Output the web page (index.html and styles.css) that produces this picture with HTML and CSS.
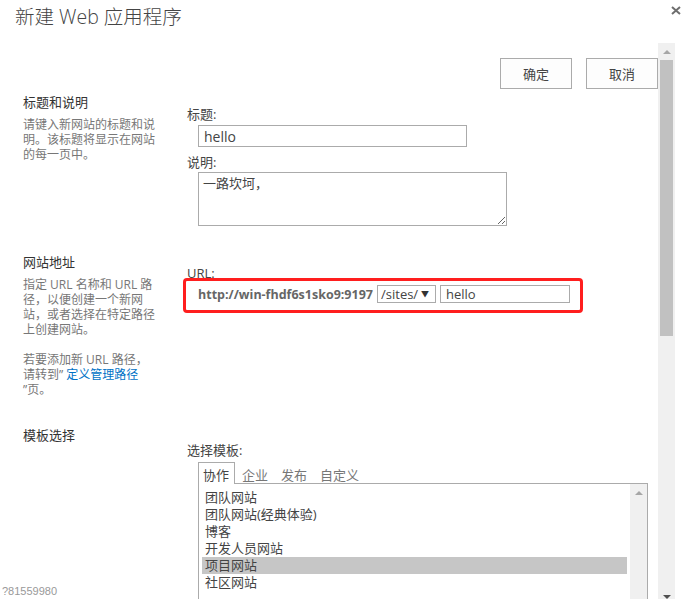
FILE: index.html
```html
<!DOCTYPE html>
<html lang="zh-CN">
<head>
<meta charset="utf-8">
<title>新建 Web 应用程序</title>
<link rel="stylesheet" href="styles.css">
</head>
<body>
<div class="dialog">
  <header class="dlg-head">
    <h1 class="dlg-title">新建 Web 应用程序</h1>
    <span class="dlg-close"><svg width="10" height="9" viewBox="0 0 10 9"><path d="M1 1 L9 8 M9 1 L1 8" stroke="#6e6e6e" stroke-width="2" fill="none"/></svg></span>
  </header>
  <div class="dlg-body">
    <div class="content">
      <div class="actions">
        <button class="btn">确定</button>
        <button class="btn">取消</button>
      </div>

      <section class="sec sec-title-desc">
        <div class="sec-left">
          <h2 class="sec-title">标题和说明</h2>
          <p class="sec-desc">请键入新网站的标题和说<br>明。该标题将显示在网站<br>的每一页中。</p>
        </div>
        <div class="sec-right pad-12">
          <label class="fld-label">标题:</label>
          <input class="txt txt-title" type="text" value="hello">
          <label class="fld-label lbl-desc">说明:</label>
          <textarea class="txt txt-area">一路坎坷，</textarea>
        </div>
      </section>

      <section class="sec sec-url">
        <div class="sec-left">
          <h2 class="sec-title">网站地址</h2>
          <p class="sec-desc">指定 URL 名称和 URL 路<br>径，以便创建一个新网<br>站，或者选择在特定路径<br>上创建网站。<br><br>若要添加新 URL 路径，<br>请转到” <a class="lnk" href="#">定义管理路径</a><br>”页。</p>
        </div>
        <div class="sec-right pad-12">
          <label class="fld-label lbl-url">URL:</label>
          <div class="url-row">
            <span class="url-host">http://win-fhdf6s1sko9:9197</span>
            <span class="sel">/sites/<span class="sel-arrow">▼</span></span>
            <input class="txt txt-url" type="text" value="hello">
            <span class="highlight"></span>
          </div>
        </div>
      </section>

      <section class="sec sec-tpl">
        <div class="sec-left">
          <h2 class="sec-title">模板选择</h2>
        </div>
        <div class="sec-right pad-15">
          <label class="fld-label">选择模板:</label>
          <div class="tabs">
            <span class="tab tab-on">协作</span>
            <span class="tab">企业</span>
            <span class="tab">发布</span>
            <span class="tab">自定义</span>
          </div>
          <div class="panel">
            <ul class="tpl-list">
              <li class="tpl-item">团队网站</li>
              <li class="tpl-item">团队网站(经典体验)</li>
              <li class="tpl-item">博客</li>
              <li class="tpl-item">开发人员网站</li>
              <li class="tpl-item tpl-sel">项目网站</li>
              <li class="tpl-item">社区网站</li>
            </ul>
            <div class="mini-scroll"><span class="arr-up arr-light"></span></div>
          </div>
        </div>
      </section>
    </div>
    <div class="vscroll">
      <div class="vs-btn"><span class="arr-up arr-light"></span></div>
      <div class="vs-thumb"></div>
      <div class="vs-fill"></div>
      <div class="vs-down"><span class="arr-down"></span></div>
    </div>
  </div>
  <div class="corner-id">?81559980</div>
</div>
</body>
</html>
```

FILE: styles.css
```css
* { box-sizing: border-box; }
html, body { margin: 0; padding: 0; background: #fff; }
body {
  font-family: "Segoe UI", "Open Sans", "Noto Sans CJK SC", sans-serif;
  font-size: 13px;
  color: #444;
}
.dialog {
  position: relative;
  width: 689px;
  height: 599px;
  overflow: hidden;
  background: #fff;
}
.dlg-head {
  height: 43px;
  display: flex;
  align-items: flex-start;
  justify-content: space-between;
  padding: 0 8px 0 15px;
}
.dlg-title {
  margin: 4px 0 0;
  font-size: 19.5px;
  font-weight: 300;
  line-height: 26px;
  color: #444;
  font-family: "Segoe UI", "Open Sans", "Noto Sans CJK SC", sans-serif;
}
.dlg-close {
  margin-top: 6px;
  width: 10px;
  height: 9px;
  display: block;
}
.dlg-close svg { display: block; }
.dlg-body {
  display: flex;
  height: 556px;
}
.content {
  width: 658px;
  padding-top: 15px;
  overflow: hidden;
}
.actions {
  display: flex;
  justify-content: flex-end;
  gap: 14px;
  padding-right: 0;
}
.btn {
  width: 72px;
  height: 31px;
  border: 1px solid #ababab;
  background: #fdfdfd;
  font: inherit;
  font-size: 13px;
  color: #444;
  padding: 0;
}
.sec {
  display: grid;
  grid-template-columns: 164px 1fr;
  padding-left: 23px;
}
.sec-title-desc { margin-top: 4px; }
.sec-url { margin-top: 27px; }
.sec-tpl { margin-top: 29px; }
.sec-title {
  margin: 0;
  font-size: 13px;
  font-weight: 400;
  line-height: 18px;
  color: #333;
}
.sec-desc {
  margin: 6px 0 0;
  font-size: 12px;
  line-height: 15px;
  color: #777;
  white-space: nowrap;
}
.lnk { color: #0072c6; text-decoration: none; }
.pad-12 { padding-top: 12px; }
.pad-15 { padding-top: 15px; }
.fld-label {
  display: block;
  line-height: 18px;
  color: #444;
}
.lbl-desc { margin-top: 6px; }
.lbl-url { line-height: 16px; }
.txt {
  display: block;
  margin-left: 11px;
  border: 1px solid #ababab;
  background: #fff;
  font: inherit;
  color: #444;
  outline: none;
}
.txt-title {
  margin-top: 2px;
  width: 269px;
  height: 22px;
  padding: 0 5px;
  font-size: 14px;
}
.txt-area {
  margin-top: 1px;
  width: 309px;
  height: 54px;
  padding: 2px 4px;
  font-size: 13px;
  line-height: 17px;
  resize: both;
}
.url-row {
  position: relative;
  margin: 4px 0 0 11px;
  height: 18px;
  display: flex;
  align-items: center;
}
.url-host {
  font-weight: 700;
  font-size: 12.5px;
  color: #666;
  width: 179px;
  white-space: nowrap;
}
.sel {
  width: 59px;
  height: 18px;
  border: 1px solid #ababab;
  padding: 0 0 0 3px;
  line-height: 16px;
  font-size: 13px;
  color: #444;
  display: flex;
  justify-content: space-between;
}
.sel-arrow {
  font-size: 8px;
  color: #333;
  padding-right: 6px;
  line-height: 15px;
}
.txt-url {
  margin-left: 4px;
  width: 130px;
  height: 18px;
  padding: 0 5px;
  font-size: 13px;
}
.highlight {
  position: absolute;
  left: -15px;
  top: -7px;
  width: 400px;
  height: 35px;
  border: 3px solid #ff1e1e;
  border-radius: 4px;
  pointer-events: none;
}
.tabs {
  margin: 3px 0 0 11px;
  display: flex;
  position: relative;
  z-index: 1;
}
.tab {
  height: 22px;
  padding: 4px 5px 0 4px;
  line-height: 17px;
  border: 1px solid transparent;
  border-bottom: 0;
  margin-right: 2px;
  color: #777;
  background: transparent;
}
.tab-on {
  border-color: #ababab;
  background: #fff;
  color: #444;
}
.panel {
  margin: -1px 0 0 11px;
  width: 450px;
  height: 140px;
  border: 1px solid #ababab;
  display: flex;
}
.tpl-list {
  list-style: none;
  margin: 0;
  padding: 5px 3px 0 3px;
  flex: 1;
}
.tpl-item {
  height: 17px;
  line-height: 17px;
  padding-left: 3px;
  color: #444;
  white-space: nowrap;
}
.tpl-sel { background: #c6c6c6; }
.mini-scroll {
  width: 17px;
  background: #f0f0f0;
  display: flex;
  justify-content: center;
  padding-top: 7px;
}
.arr-up {
  width: 0;
  height: 0;
  border-left: 4px solid transparent;
  border-right: 4px solid transparent;
  border-bottom: 4px solid #a6a6a6;
}
.arr-down {
  width: 0;
  height: 0;
  border-left: 4px solid transparent;
  border-right: 4px solid transparent;
  border-top: 4px solid #505050;
}
.vscroll {
  width: 17px;
  background: #f0f0f0;
  display: flex;
  flex-direction: column;
  align-items: center;
}
.vs-btn {
  height: 17px;
  width: 17px;
  display: flex;
  justify-content: center;
  align-items: center;
}
.vs-thumb {
  width: 13px;
  height: 276px;
  background: #c1c1c1;
}
.vs-fill { flex: 1; }
.vs-down {
  height: 4px;
  display: flex;
  align-items: flex-start;
}
.corner-id {
  position: absolute;
  left: 2px;
  bottom: 2px;
  font-family: "Liberation Sans", Arial, sans-serif;
  font-size: 11px;
  line-height: 11px;
  color: #999;
  background: #fff;
}
```
